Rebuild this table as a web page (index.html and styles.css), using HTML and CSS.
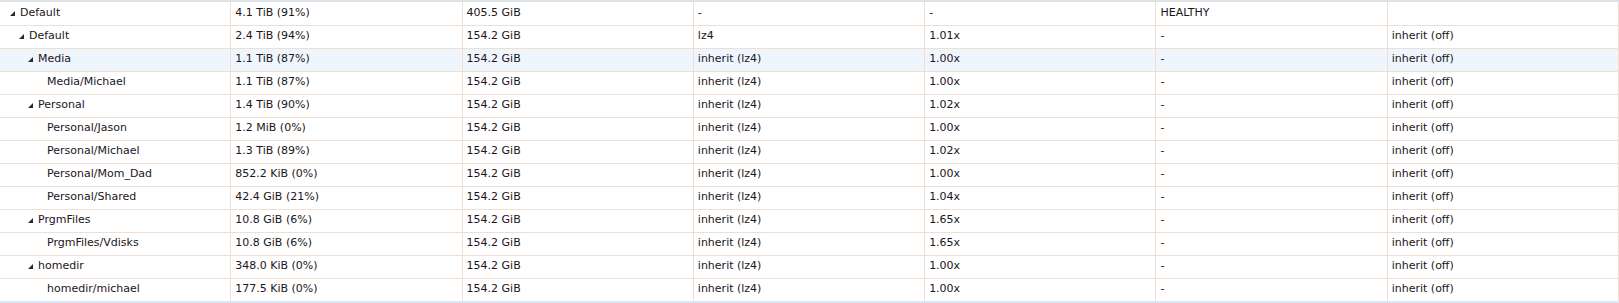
FILE: index.html
```html
<!DOCTYPE html>
<html>
<head>
<meta charset="utf-8">
<link rel="stylesheet" href="styles.css">
</head>
<body>
<div class="grid">
<table class="tree">
<tbody>
<tr class="first"><td class="name lvl0"><span class="tog"><i class="tri"></i></span>Default</td><td>4.1 TiB (91%)</td><td>405.5 GiB</td><td>-</td><td>-</td><td>HEALTHY</td><td></td></tr>
<tr><td class="name lvl1"><span class="tog"><i class="tri"></i></span>Default</td><td>2.4 TiB (94%)</td><td>154.2 GiB</td><td>lz4</td><td>1.01x</td><td>-</td><td>inherit (off)</td></tr>
<tr class="hover"><td class="name lvl2"><span class="tog"><i class="tri"></i></span>Media</td><td>1.1 TiB (87%)</td><td>154.2 GiB</td><td>inherit (lz4)</td><td>1.00x</td><td>-</td><td>inherit (off)</td></tr>
<tr><td class="name lvl3"><span class="tog"></span>Media/Michael</td><td>1.1 TiB (87%)</td><td>154.2 GiB</td><td>inherit (lz4)</td><td>1.00x</td><td>-</td><td>inherit (off)</td></tr>
<tr><td class="name lvl2"><span class="tog"><i class="tri"></i></span>Personal</td><td>1.4 TiB (90%)</td><td>154.2 GiB</td><td>inherit (lz4)</td><td>1.02x</td><td>-</td><td>inherit (off)</td></tr>
<tr><td class="name lvl3"><span class="tog"></span>Personal/Jason</td><td>1.2 MiB (0%)</td><td>154.2 GiB</td><td>inherit (lz4)</td><td>1.00x</td><td>-</td><td>inherit (off)</td></tr>
<tr><td class="name lvl3"><span class="tog"></span>Personal/Michael</td><td>1.3 TiB (89%)</td><td>154.2 GiB</td><td>inherit (lz4)</td><td>1.02x</td><td>-</td><td>inherit (off)</td></tr>
<tr><td class="name lvl3"><span class="tog"></span>Personal/Mom_Dad</td><td>852.2 KiB (0%)</td><td>154.2 GiB</td><td>inherit (lz4)</td><td>1.00x</td><td>-</td><td>inherit (off)</td></tr>
<tr><td class="name lvl3"><span class="tog"></span>Personal/Shared</td><td>42.4 GiB (21%)</td><td>154.2 GiB</td><td>inherit (lz4)</td><td>1.04x</td><td>-</td><td>inherit (off)</td></tr>
<tr><td class="name lvl2"><span class="tog"><i class="tri"></i></span>PrgmFiles</td><td>10.8 GiB (6%)</td><td>154.2 GiB</td><td>inherit (lz4)</td><td>1.65x</td><td>-</td><td>inherit (off)</td></tr>
<tr><td class="name lvl3"><span class="tog"></span>PrgmFiles/Vdisks</td><td>10.8 GiB (6%)</td><td>154.2 GiB</td><td>inherit (lz4)</td><td>1.65x</td><td>-</td><td>inherit (off)</td></tr>
<tr><td class="name lvl2"><span class="tog"><i class="tri"></i></span>homedir</td><td>348.0 KiB (0%)</td><td>154.2 GiB</td><td>inherit (lz4)</td><td>1.00x</td><td>-</td><td>inherit (off)</td></tr>
<tr class="last"><td class="name lvl3"><span class="tog"></span>homedir/michael</td><td>177.5 KiB (0%)</td><td>154.2 GiB</td><td>inherit (lz4)</td><td>1.00x</td><td>-</td><td>inherit (off)</td></tr>
</tbody>
</table>
</div>
</body>
</html>
```

FILE: styles.css
```css
html, body {
  margin: 0;
  padding: 0;
  background: #ffffff;
}

.grid {
  width: 1619px;
  border-top: 2px solid #dde2e8;
  font-family: "DejaVu Sans", Verdana, sans-serif;
  font-size: 11px;
  color: #1c1520;
}

.tree {
  width: 100%;
  table-layout: fixed;
  border-collapse: separate;
  border-spacing: 0;
}

.tree td {
  height: 20px;
  line-height: 20px;
  padding: 0 4px 2px 4px;
  border-right: 1px solid #f0dfd0;
  border-bottom: 1px solid #f0dfd0;
  white-space: nowrap;
  overflow: hidden;
  vertical-align: top;
}

.tree tr.first td {
  padding-top: 1px;
}

.tree tr.hover td {
  background: #eff5fd;
}

.tree tr.last td {
  border-bottom: 2px solid #dbe7f4;
}

.tree td.name {
  padding-left: 10px;
}

.tree td.lvl1 { padding-left: 19px; }
.tree td.lvl2 { padding-left: 28px; }
.tree td.lvl3 { padding-left: 37px; }

.tog {
  display: inline-block;
  width: 10px;
  height: 1px;
}

.tri {
  display: inline-block;
  width: 0;
  height: 0;
  border-left: 5px solid transparent;
  border-bottom: 5px solid #2a2a2a;
}
```
